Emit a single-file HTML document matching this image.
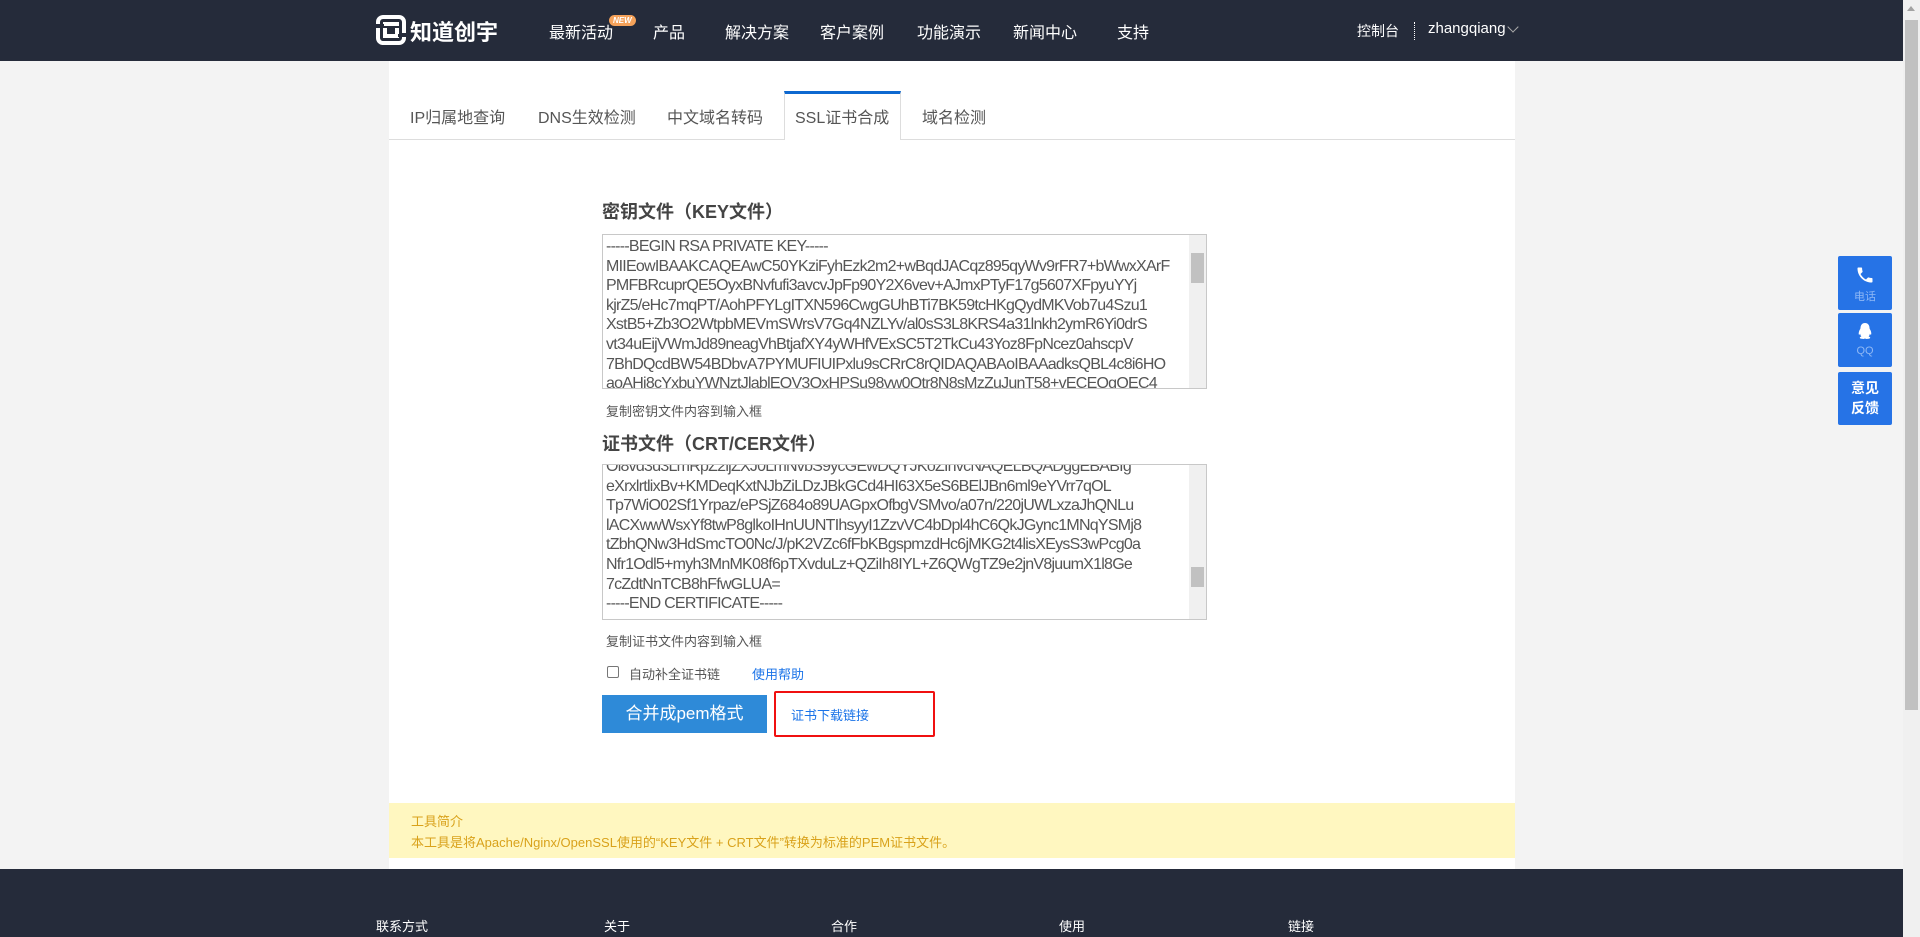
<!DOCTYPE html>
<html><head><meta charset="utf-8"><style>
*{margin:0;padding:0;box-sizing:border-box}
body{width:1920px;height:937px;overflow:hidden;background:#f3f3f3;font-family:"Liberation Sans","Noto Sans CJK SC",sans-serif;position:relative}
.a{position:absolute;white-space:nowrap}
.hdr{position:absolute;left:0;top:0;width:1903px;height:61px;background:#252b3a}
.nav{color:#fff;font-size:16px;top:19px}
.wrap{position:absolute;left:389px;top:61px;width:1126px;height:808px;background:#fff}
.tab{font-size:16px;color:#555;top:104px}
.ta{position:absolute;left:602px;width:605px;border:1px solid #c8c8c8;background:#fff;overflow:hidden;font-size:16px;line-height:19.6px;color:#555;padding:2px 24px 0 3px;letter-spacing:-0.75px}
.sb{position:absolute;right:0;top:0;width:17px;height:100%;background:#f0f0f0}
.ttl{font-size:18px;font-weight:bold;color:#444;left:602px}
.side{position:absolute;left:1838px;width:54px;background:#2673e6;border-radius:2px;color:#fff;text-align:center}
.ft{color:#fff;font-size:13px;top:916px}
</style></head><body>
<div class="hdr"></div>
<div class="a" style="left:376px;top:15px;width:30px;height:30px;border:4px solid #fff;border-radius:7px"></div>
<div class="a" style="left:383px;top:22px;width:16px;height:16px;border-top:4px solid #fff;border-bottom:4px solid #fff"></div>
<div class="a" style="left:376px;top:24px;width:8px;height:4px;background:#252b3a"></div>
<div class="a" style="left:398px;top:33px;width:8px;height:4px;background:#252b3a"></div>
<div class="a" style="left:383px;top:28px;width:4px;height:6px;background:#fff"></div>
<div class="a" style="left:395px;top:28px;width:4px;height:6px;background:#fff"></div>
<div class="a" style="left:410px;top:15px;color:#fff;font-size:22px;font-weight:bold">知道创宇</div>
<div class="a nav" style="left:549px">最新活动</div>
<div class="a" style="left:609px;top:15px;background:#f5a25a;color:#fff;font-size:8px;font-style:italic;font-weight:bold;padding:1px 4px;border-radius:6px">NEW</div>
<div class="a nav" style="left:653px">产品</div>
<div class="a nav" style="left:725px">解决方案</div>
<div class="a nav" style="left:820px">客户案例</div>
<div class="a nav" style="left:917px">功能演示</div>
<div class="a nav" style="left:1013px">新闻中心</div>
<div class="a nav" style="left:1117px">支持</div>
<div class="a" style="left:1357px;top:21px;color:#fff;font-size:14px">控制台</div>
<div class="a" style="left:1414px;top:22px;height:18px;border-left:1px dotted #fff"></div>
<div class="a" style="left:1428px;top:20px;color:#fff;font-size:15px">zhangqiang</div>
<div class="a" style="left:1509px;top:23px;width:8px;height:8px;border-right:1px solid #aaa;border-bottom:1px solid #aaa;transform:rotate(45deg)"></div>
<div class="wrap"></div>
<div class="a" style="left:389px;top:139px;width:1126px;border-top:1px solid #ddd"></div>
<div class="a" style="left:784px;top:91px;width:117px;height:49px;background:#fff;border:1px solid #ddd;border-top:3px solid #0d68d0;border-bottom:none"></div>
<div class="a tab" style="left:410px">IP归属地查询</div>
<div class="a tab" style="left:538px">DNS生效检测</div>
<div class="a tab" style="left:667px">中文域名转码</div>
<div class="a tab" style="left:795px">SSL证书合成</div>
<div class="a tab" style="left:922px">域名检测</div>
<div class="a ttl" style="top:198px">密钥文件（KEY文件）</div>
<div class="ta" style="top:234px;height:155px">-----BEGIN RSA PRIVATE KEY-----<br>MIIEowIBAAKCAQEAwC50YKziFyhEzk2m2+wBqdJACqz895qyWv9rFR7+bWwxXArF<br>PMFBRcuprQE5OyxBNvfufi3avcvJpFp90Y2X6vev+AJmxPTyF17g5607XFpyuYYj<br>kjrZ5/eHc7mqPT/AohPFYLgITXN596CwgGUhBTi7BK59tcHKgQydMKVob7u4Szu1<br>XstB5+Zb3O2WtpbMEVmSWrsV7Gq4NZLYv/al0sS3L8KRS4a31lnkh2ymR6Yi0drS<br>vt34uEijVWmJd89neagVhBtjafXY4yWHfVExSC5T2TkCu43Yoz8FpNcez0ahscpV<br>7BhDQcdBW54BDbvA7PYMUFIUIPxlu9sCRrC8rQIDAQABAoIBAAadksQBL4c8i6HO<br>aoAHi8cYxbuYWNztJlablEOV3OxHPSu98vw0Qtr8N8sMzZuJunT58+vECEOgQEC4
<div class="sb"><div style="position:absolute;left:2px;top:18px;width:13px;height:30px;background:#c1c1c1"></div></div></div>
<div class="a" style="left:606px;top:401px;font-size:13px;color:#555">复制密钥文件内容到输入框</div>
<div class="a ttl" style="top:430px">证书文件（CRT/CER文件）</div>
<div class="ta" style="top:464px;height:156px;padding-top:0"><div style="margin-top:-8px">Ol8vd3d3LmRpZ2ljZXJ0LmNvbS9ycGEwDQYJKoZIhvcNAQELBQADggEBABIg<br>eXrxlrtlixBv+KMDeqKxtNJbZiLDzJBkGCd4HI63X5eS6BElJBn6ml9eYVrr7qOL<br>Tp7WiO02Sf1Yrpaz/ePSjZ684o89UAGpxOfbgVSMvo/a07n/220jUWLxzaJhQNLu<br>lACXwwWsxYf8twP8glkoIHnUUNTIhsyyI1ZzvVC4bDpl4hC6QkJGync1MNqYSMj8<br>tZbhQNw3HdSmcTO0Nc/J/pK2VZc6fFbKBgspmzdHc6jMKG2t4lisXEysS3wPcg0a<br>Nfr1Odl5+myh3MnMK08f6pTXvduLz+QZiIh8IYL+Z6QWgTZ9e2jnV8juumX1l8Ge<br>7cZdtNnTCB8hFfwGLUA=<br>-----END CERTIFICATE-----</div>
<div class="sb"><div style="position:absolute;left:2px;top:102px;width:13px;height:20px;background:#c1c1c1"></div></div></div>
<div class="a" style="left:606px;top:631px;font-size:13px;color:#555">复制证书文件内容到输入框</div>
<div class="a" style="left:607px;top:666px;width:12px;height:12px;border:1px solid #777;border-radius:2px"></div>
<div class="a" style="left:629px;top:664px;font-size:13px;color:#555">自动补全证书链</div>
<div class="a" style="left:752px;top:664px;font-size:13px;color:#1a73e8">使用帮助</div>
<div class="a" style="left:602px;top:695px;width:165px;height:38px;background:#2e8ad8;color:#fff;font-size:17px;text-align:center;line-height:38px">合并成pem格式</div>
<div class="a" style="left:774px;top:691px;width:161px;height:46px;border:2px solid #f01010;border-radius:2px"></div>
<div class="a" style="left:791px;top:705px;font-size:13px;color:#1a73e8">证书下载链接</div>
<div class="a" style="left:389px;top:803px;width:1126px;height:55px;background:#fff7c0"></div>
<div class="a" style="left:411px;top:811px;font-size:13px;color:#d9a21b">工具简介</div>
<div class="a" style="left:411px;top:832px;font-size:13px;color:#d9a21b">本工具是将Apache/Nginx/OpenSSL使用的“KEY文件 + CRT文件”转换为标准的PEM证书文件。</div>
<div class="a" style="left:0;top:869px;width:1903px;height:68px;background:#252b3a"></div>
<div class="a ft" style="left:376px">联系方式</div>
<div class="a ft" style="left:604px">关于</div>
<div class="a ft" style="left:831px">合作</div>
<div class="a ft" style="left:1059px">使用</div>
<div class="a ft" style="left:1288px">链接</div>
<div class="side" style="top:256px;height:54px"><svg width="20" height="20" viewBox="0 0 24 24" style="margin-top:9px"><path fill="#fff" d="M6.6 10.8c1.4 2.8 3.8 5.1 6.6 6.6l2.2-2.2c.3-.3.7-.4 1-.2 1.1.4 2.3.6 3.6.6.6 0 1 .4 1 1V20c0 .6-.4 1-1 1C10.6 21 3 13.4 3 4c0-.6.4-1 1-1h3.5c.6 0 1 .4 1 1 0 1.3.2 2.5.6 3.6.1.3 0 .7-.2 1z"/></svg><div style="font-size:11px;color:#8fb8f5;margin-top:-2px">电话</div></div>
<div class="side" style="top:313px;height:54px"><svg width="18" height="20" viewBox="0 0 18 20" style="margin-top:9px"><path fill="#fff" d="M9 1c3 0 4.5 2.3 4.5 5 0 1 .8 1.5 1.3 3 .6 1.6.7 3.7 0 3.8-.4 0-.8-.7-1-1 0 1-.5 2-1.2 2.6 1 .4 1.6.9 1.6 1.4 0 .8-1.8 1.2-3.5 1.2-.9 0-1.4-.3-1.7-.6-.3.3-.8.6-1.7.6-1.700 0-3.5-.4-3.5-1.2 0-.5.6-1 1.6-1.4C4.7 13.8 4.2 12.8 4.2 11.8c-.2.3-.6 1-1 1-.7-.1-.6-2.2 0-3.8.5-1.5 1.3-2 1.3-3C4.5 3.3 6 1 9 1z"/></svg><div style="font-size:11px;color:#8fb8f5;margin-top:-2px">QQ</div></div>
<div class="side" style="top:372px;height:53px;font-size:14px;line-height:20px;padding-top:6px;font-weight:bold">意见<br>反馈</div>
<div class="a" style="left:1903px;top:0;width:17px;height:937px;background:#f0f0f0"></div>
<div class="a" style="left:1905px;top:20px;width:13px;height:690px;background:#c1c1c1"></div>
<div class="a" style="left:1907px;top:6px;width:0;height:0;border-left:4px solid transparent;border-right:4px solid transparent;border-bottom:5px solid #a3a3a3"></div>
</body></html>
